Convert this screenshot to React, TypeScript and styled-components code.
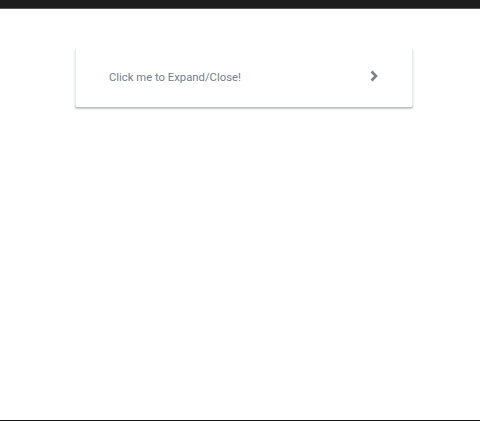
import React, { useState } from "react";
import styled, { createGlobalStyle } from "styled-components";

const Global = createGlobalStyle`
  html, body { margin: 0; padding: 0; background: #fff; }
  body { font-family: Roboto, "Liberation Sans", Arial, sans-serif; }
`;

const Page = styled.div`
  height: 421px;
  display: flex;
  flex-direction: column;
  box-sizing: border-box;
  border-bottom: 1px solid #111;
`;

const TopBar = styled.div`
  height: 8px;
  background: #1e1e1e;
  border-bottom: 1px solid #5a5a5a;
  flex-shrink: 0;
`;

const Main = styled.div`
  flex: 1;
  padding: 39px 0 0 75px;
`;

const Card = styled.button`
  width: 338px;
  height: 59px;
  box-sizing: border-box;
  display: flex;
  align-items: center;
  justify-content: space-between;
  padding: 0 33px 0 33px;
  background: #fff;
  border: none;
  border-left: 1px dotted #d4d9dc;
  border-right: 1px dotted #d4d9dc;
  border-radius: 2px;
  box-shadow: 0 2px 2px rgba(60, 70, 80, 0.28), 0 1px 1px rgba(60, 70, 80, 0.12);
  cursor: pointer;
  font: inherit;
`;

const Label = styled.span`
  font-size: 11.3px;
  color: #75808a;
  letter-spacing: 0;
  margin-top: -1px;
`;

const Chevron = styled.svg<{ $open: boolean }>`
  width: 10px;
  height: 14px;
  margin-top: -4px;
  transform: rotate(${(p) => (p.$open ? 90 : 0)}deg);
  transition: transform 0.2s;
`;

export default function App() {
  const [open, setOpen] = useState(false);
  return (
    <>
      <Global />
      <Page>
        <TopBar />
        <Main>
          <Card onClick={() => setOpen(!open)}>
            <Label>Click me to Expand/Close!</Label>
            <Chevron $open={open} viewBox="0 0 10 14">
              <polyline
                points="2.5,2.5 7,7 2.5,11.5"
                fill="none"
                stroke="#7b8189"
                strokeWidth="2.6"
                strokeLinecap="butt"
                strokeLinejoin="miter"
              />
            </Chevron>
          </Card>
        </Main>
      </Page>
    </>
  );
}
